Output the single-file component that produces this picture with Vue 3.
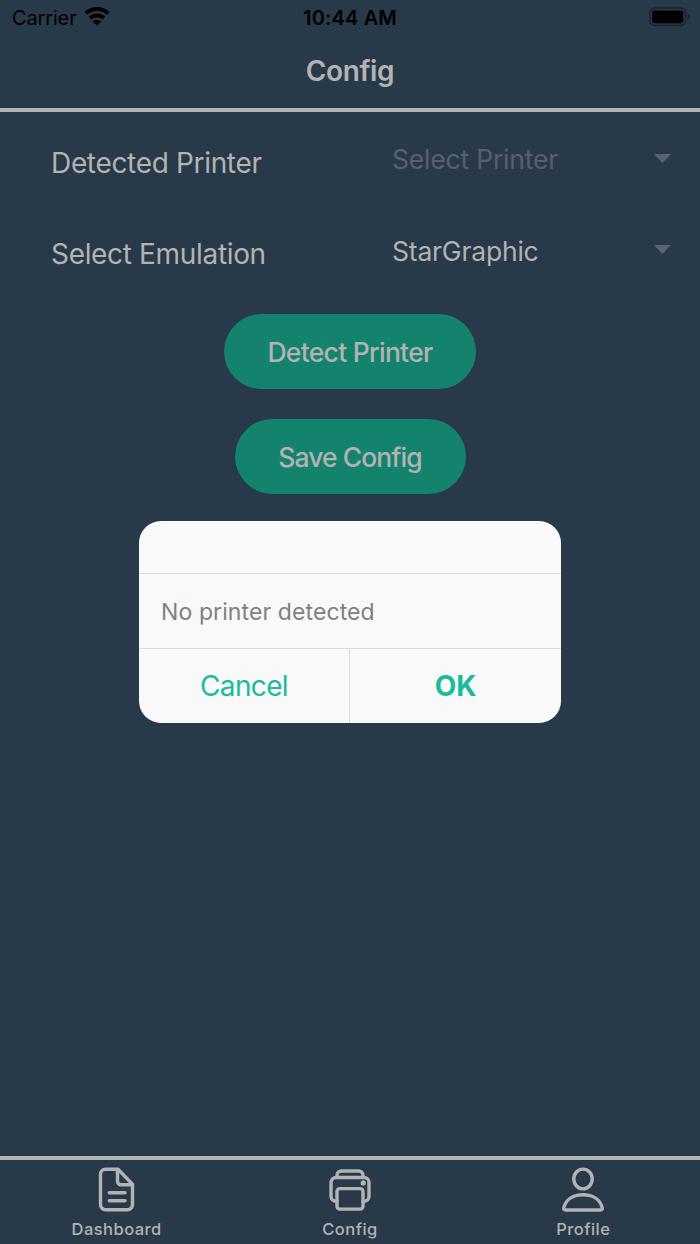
<script setup>
const rows = [
  { label: 'Detected Printer', value: 'Select Printer', empty: true },
  { label: 'Select Emulation', value: 'StarGraphic', empty: false },
]
</script>

<template>
  <div class="screen">
    <div class="status">
      <div class="carrier">
        <span class="carrier-name">Carrier</span>
        <svg class="wifi" width="26" height="20" viewBox="0 0 26 20">
          <path d="M13 0C8.100 0 3.700 1.900.5 5l2.500 2.700C5.600 5.300 9.100 3.900 13 3.900s7.400 1.400 10 3.800L25.500 5C22.300 1.900 17.900 0 13 0Z" />
          <path d="M13 6.600c-3.200 0-6 1.200-8.200 3.200l2.600 2.800c1.500-1.300 3.500-2.100 5.600-2.100s4.100.8 5.600 2.100l2.600-2.800c-2.200-2-5-3.200-8.200-3.200Z" />
          <path d="M13 13c-1.600 0-3 .5-4.200 1.500L13 18.800l4.200-4.300c-1.200-1-2.600-1.500-4.200-1.500Z" />
        </svg>
      </div>
      <span class="time">10:44 AM</span>
      <svg class="battery" width="42" height="20" viewBox="0 0 42 20">
        <rect x="1" y="1" width="35.500" height="17.500" rx="5" fill="none" stroke="#18222c" stroke-width="1.500" />
        <rect x="3.200" y="3.400" width="31" height="12.800" rx="2.400" fill="#000" />
        <path d="M38.600 6.800c1.300.6 2.100 1.600 2.100 3s-.8 2.400-2.100 3Z" fill="#18222c" />
      </svg>
    </div>

    <header class="header"><span class="title">Config</span></header>

    <main class="content">
      <div v-for="row in rows" :key="row.label" class="row">
        <div class="label"><span>{{ row.label }}</span></div>
        <div class="select" :class="{ empty: row.empty }">
          <span class="value">{{ row.value }}</span>
          <svg class="arrow" width="17" height="9" viewBox="0 0 17 9"><path d="M0 0h17L8.500 9Z" /></svg>
        </div>
      </div>
      <button class="button detect"><span>Detect Printer</span></button>
      <button class="button save"><span>Save Config</span></button>
    </main>

    <nav class="tabs">
      <div class="tab">
        <svg width="44" height="48" viewBox="0 0 44 48">
          <path d="M10.500 3.300H23l14.500 15v20.400a5 5 0 0 1-5 5h-22a5 5 0 0 1-5-5V8.300a5 5 0 0 1 5-5Z" />
          <path d="M22.500 3.700V15.200a3.500 3.500 0 0 0 3.500 3.500h11.500M14.300 26.800h15.800M14.300 34.800h15.800" />
        </svg>
        <span>Dashboard</span>
      </div>
      <div class="tab">
        <svg width="44" height="48" viewBox="0 0 44 48">
          <path d="M9 35.300H8a5 5 0 0 1-5-5V16.500a5 5 0 0 1 5-5h28a5 5 0 0 1 5 5v13.800a5 5 0 0 1-5 5h-1" />
          <path d="M9 11V9.300a4.300 4.300 0 0 1 4.300-4.300h17.400A4.300 4.300 0 0 1 35 9.300V11" />
          <rect x="9" y="22.600" width="26" height="20.500" rx="2.800" />
          <circle class="dot" cx="35.200" cy="16.900" r="2.600" />
        </svg>
        <span>Config</span>
      </div>
      <div class="tab">
        <svg width="44" height="48" viewBox="0 0 44 48">
          <ellipse cx="22" cy="13" rx="9.200" ry="9.900" />
          <path d="M4.500 44h35c1.500 0 2-.9 1.700-2.300C39.200 33.200 31.500 28.800 22 28.800S4.800 33.200 2.800 41.700c-.3 1.400.2 2.300 1.700 2.300Z" />
        </svg>
        <span>Profile</span>
      </div>
    </nav>

    <div class="dialog">
      <div class="dialog-title"></div>
      <div class="dialog-body"><span>No printer detected</span></div>
      <div class="dialog-actions">
        <button class="cancel"><span>Cancel</span></button>
        <button class="ok"><span>OK</span></button>
      </div>
    </div>
  </div>
</template>

<style>
body { margin: 0; background: #283949; }
</style>

<style scoped>
.screen {
  position: relative;
  box-sizing: border-box;
  width: 700px;
  height: 1244px;
  display: flex;
  flex-direction: column;
  overflow: hidden;
  background: #283949;
  color: #b3b3b3;
  font-family: Inter, "Liberation Sans", sans-serif;
}
span { white-space: nowrap; }
button { border: 0; padding: 0; font-family: inherit; }
.status {
  display: grid;
  grid-template-columns: 1fr auto 1fr;
  height: 36px;
  align-items: center;
  color: #000;
  font-size: 20px;
}
.carrier { display: flex; align-items: center; gap: 7px; padding-left: 12px; }
.carrier-name { width: 65px; letter-spacing: -0.15px; }
.wifi { margin-top: -3px; fill: #000; }
.time { font-weight: 600; letter-spacing: 0.15px; }
.battery { justify-self: end; margin: -2px 9px 0 0; }
.header {
  display: flex;
  box-sizing: border-box;
  height: 76px;
  align-items: center;
  justify-content: center;
  border-bottom: 4px solid #b3b3b3;
  padding-bottom: 2px;
}
.title { font-size: 28px; font-weight: 600; letter-spacing: -0.4px; }
.content {
  display: flex;
  flex: 1;
  flex-direction: column;
  align-items: center;
  padding-top: 5px;
}
.row { display: flex; width: 100%; height: 91.500px; flex: none; }
.label { display: flex; align-items: center; width: 341px; padding-left: 51px; font-size: 28px; height: 91px; letter-spacing: -0.33px; }
.select {
  display: flex;
  align-items: center;
  justify-content: space-between;
  width: 279px;
  height: 84px;
  font-size: 26.500px;
  letter-spacing: -0.2px;
}
.empty .value { color: #56616c; }
.arrow { margin-top: -2px; fill: #5a636d; }
.button {
  display: flex;
  flex: none;
  align-items: center;
  justify-content: center;
  height: 75px;
  border-radius: 38px;
  background: #13836d;
  color: #b3b3b3;
  font-size: 26.500px;
  font-weight: 500;
}
.detect { width: 252px; margin-top: 14px; letter-spacing: -0.72px; }
.save { width: 231px; margin-top: 30px; letter-spacing: -0.95px; }
.tabs {
  display: flex;
  box-sizing: border-box;
  height: 88px;
  flex: none;
  border-top: 4px solid #b3b3b3;
}
.tab { display: flex; flex: 1; flex-direction: column; align-items: center; padding-top: 6px; font-size: 16.500px; font-weight: 500; line-height: 20px; }
.tab svg { flex: none; fill: none; stroke: #b3b3b3; stroke-width: 3.400; stroke-linecap: round; stroke-linejoin: round; }
.tab .dot { fill: #b3b3b3; stroke: none; }
.tab span { margin-top: 5px; letter-spacing: 0.45px; }
.dialog {
  position: absolute;
  top: 521px;
  left: 139px;
  display: flex;
  flex-direction: column;
  width: 422px;
  height: 202px;
  overflow: hidden;
  border-radius: 22px;
  background: #f9f9f9;
}
.dialog-title { height: 52px; border-bottom: 1px solid #dcdcdd; }
.dialog-body { display: flex; box-sizing: border-box; align-items: center; height: 75px; padding: 1px 0 0 22px; border-bottom: 1px solid #dcdcdd; color: #808080; font-size: 23px; letter-spacing: 0.1px; }
.dialog-actions { display: flex; flex: 1; }
.dialog-actions button { display: flex; box-sizing: border-box; align-items: center; justify-content: center; background: transparent; color: #1abc9c; font-size: 28px; }
.dialog-actions .cancel { width: 211px; border-right: 1px solid #dcdcdd; letter-spacing: -0.65px; }
.dialog-actions .ok { width: 211px; font-weight: 700; }
</style>
